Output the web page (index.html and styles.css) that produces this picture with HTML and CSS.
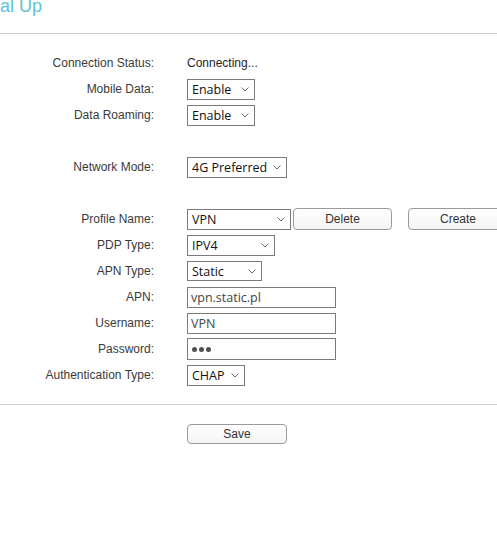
FILE: index.html
```html
<!DOCTYPE html>
<html>
<head>
<meta charset="utf-8">
<link rel="stylesheet" href="styles.css">
</head>
<body>
<div class="page">
  <h1 class="title">Dial Up</h1>
  <hr class="rule">
  <form class="form">
    <div class="row"><label class="lbl">Connection Status:</label><div class="val"><span class="status">Connecting...</span></div></div>
    <div class="row"><label class="lbl">Mobile Data:</label><div class="val"><span class="sel w68"><select><option>Enable</option></select><svg class="chev" viewBox="0 0 8 5"><path d="M0.5 0.5 L4 4 L7.5 0.5"/></svg></span></div></div>
    <div class="row"><label class="lbl">Data Roaming:</label><div class="val"><span class="sel w68"><select><option>Enable</option></select><svg class="chev" viewBox="0 0 8 5"><path d="M0.5 0.5 L4 4 L7.5 0.5"/></svg></span></div></div>
    <div class="row blank"></div>
    <div class="row"><label class="lbl">Network Mode:</label><div class="val"><span class="sel w100"><select><option>4G Preferred</option></select><svg class="chev" viewBox="0 0 8 5"><path d="M0.5 0.5 L4 4 L7.5 0.5"/></svg></span></div></div>
    <div class="row blank"></div>
    <div class="row"><label class="lbl">Profile Name:</label><div class="val"><span class="sel w104"><select><option>VPN</option></select><svg class="chev" viewBox="0 0 8 5"><path d="M0.5 0.5 L4 4 L7.5 0.5"/></svg></span><button type="button" class="btn del">Delete</button><button type="button" class="btn create">Create</button></div></div>
    <div class="row"><label class="lbl">PDP Type:</label><div class="val"><span class="sel w88"><select><option>IPV4</option></select><svg class="chev" viewBox="0 0 8 5"><path d="M0.5 0.5 L4 4 L7.5 0.5"/></svg></span></div></div>
    <div class="row"><label class="lbl">APN Type:</label><div class="val"><span class="sel w75 short"><select><option>Static</option></select><svg class="chev" viewBox="0 0 8 5"><path d="M0.5 0.5 L4 4 L7.5 0.5"/></svg></span></div></div>
    <div class="row"><label class="lbl">APN:</label><div class="val"><input class="txt" type="text" value="vpn.static.pl"></div></div>
    <div class="row"><label class="lbl">Username:</label><div class="val"><input class="txt" type="text" value="VPN"></div></div>
    <div class="row"><label class="lbl">Password:</label><div class="val"><span class="txt pwd"><i></i><i></i><i></i></span></div></div>
    <div class="row"><label class="lbl">Authentication Type:</label><div class="val"><span class="sel w58"><select><option>CHAP</option></select><svg class="chev" viewBox="0 0 8 5"><path d="M0.5 0.5 L4 4 L7.5 0.5"/></svg></span></div></div>
  </form>
  <hr class="rule rule2">
  <div class="actions"><button type="button" class="btn save">Save</button></div>
</div>
</body>
</html>
```
FILE: styles.css
```css
html, body {
  margin: 0;
  padding: 0;
  background: #fff;
}
body {
  font-family: "Liberation Sans", Arial, sans-serif;
  font-size: 12px;
  color: #333;
  overflow: hidden;
}
.page {
  width: 497px;
}
.title {
  margin: -4px 0 0 -17px;
  font-size: 18px;
  line-height: 20px;
  font-weight: normal;
  color: #5cc3d1;
}
.rule {
  margin: 17px 0 0 0;
  border: 0;
  border-top: 1px solid #cfcfcf;
  height: 0;
}
.form {
  margin-top: 16px;
}
.row {
  display: grid;
  grid-template-columns: 154px 1fr;
  column-gap: 33px;
  align-items: center;
  height: 26px;
}
.lbl {
  text-align: right;
  color: #3a3a3a;
  white-space: nowrap;
  font-size: 12px;
}
.val {
  display: flex;
  align-items: center;
  white-space: nowrap;
}
.status {
  color: #1e1e1e;
}
.sel {
  position: relative;
  display: inline-block;
  height: 21px;
}
.sel.short {
  height: 20px;
}
.sel select {
  appearance: none;
  -webkit-appearance: none;
  box-sizing: border-box;
  width: 100%;
  height: 100%;
  margin: 0;
  padding: 0 0 0 4px;
  border: 1px solid #7a7a7a;
  border-radius: 0;
  background: #fff;
  font-family: "Open Sans", "Noto Sans", sans-serif;
  font-size: 12.5px;
  color: #111;
  outline: none;
}
.chev {
  position: absolute;
  right: 6px;
  top: 50%;
  margin-top: -2px;
  width: 8px;
  height: 5px;
  fill: none;
  stroke: #6a6a6a;
  stroke-width: 1;
  pointer-events: none;
}
.w58 { width: 58px; }
.w68 { width: 68px; }
.w75 { width: 75px; }
.w88 { width: 88px; }
.w100 { width: 100px; }
.w104 { width: 104px; }
.txt {
  box-sizing: border-box;
  width: 149px;
  height: 21px;
  margin: 0;
  padding: 0 0 0 3px;
  border: 1px solid #7a7a7a;
  border-radius: 0;
  background: #fff;
  font-family: "Open Sans", "Noto Sans", sans-serif;
  font-size: 12.5px;
  color: #444;
  outline: none;
}
.pwd {
  display: flex;
  align-items: center;
  gap: 2px;
  padding-left: 4px;
  height: 22px;
}
.pwd i {
  display: block;
  width: 5px;
  height: 5px;
  border-radius: 50%;
  background: #505050;
}
.btn {
  box-sizing: border-box;
  height: 22px;
  margin: 0;
  padding: 0;
  border: 1px solid #9a9a9a;
  border-radius: 4px;
  background: linear-gradient(#ffffff, #f4f4f4);
  font-family: "Liberation Sans", Arial, sans-serif;
  font-size: 12px;
  color: #333;
}
.del {
  width: 99px;
  margin-left: 2px;
}
.create {
  width: 100px;
  margin-left: 16px;
  flex-shrink: 0;
}
.rule2 {
  margin-top: 16px;
}
.actions {
  padding: 19px 0 0 187px;
}
.save {
  width: 100px;
  height: 20px;
}
```
